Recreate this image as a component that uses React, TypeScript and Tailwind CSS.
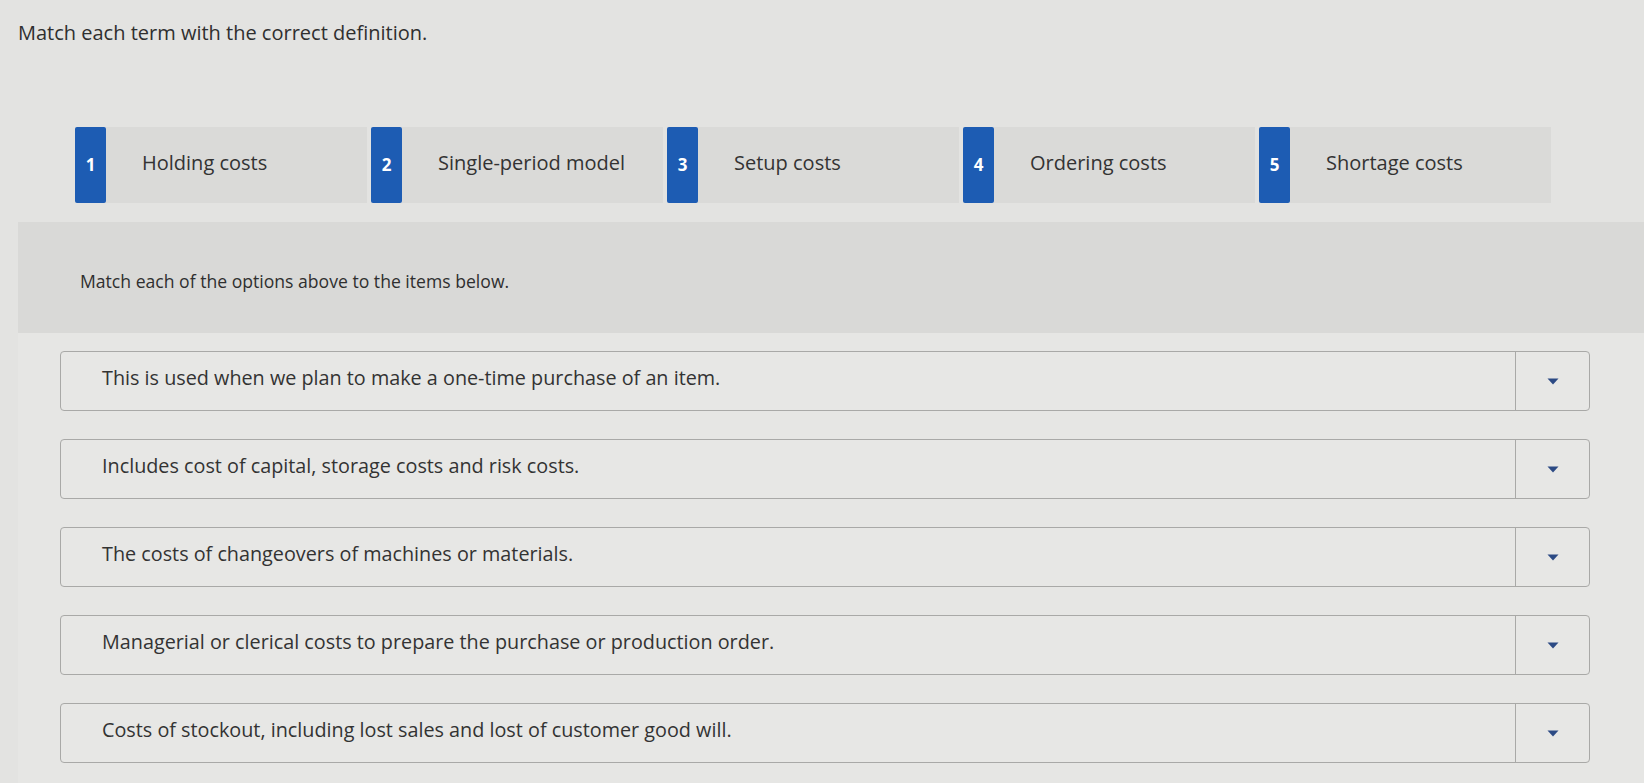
import React from 'react';

const terms = [
    'Holding costs',
    'Single-period model',
    'Setup costs',
    'Ordering costs',
    'Shortage costs',
];

const definitions = [
    'This is used when we plan to make a one-time purchase of an item.',
    'Includes cost of capital, storage costs and risk costs.',
    'The costs of changeovers of machines or materials.',
    'Managerial or clerical costs to prepare the purchase or production order.',
    'Costs of stockout, including lost sales and lost of customer good will.',
];

const Caret: React.FC = () => (
    <svg width="12" height="7" viewBox="0 0 12 7" aria-hidden="true">
        <path d="M0.5 0.5 H11.5 L6 6.5 Z" fill="#2c4a84" />
    </svg>
);

const TermChip: React.FC<{ index: number; label: string }> = ({ index, label }) => (
    <div className="flex h-[76px] w-[292px] items-stretch">
        <div className="flex w-[31px] items-center justify-center rounded-[2px] bg-[#1d5cb3] text-[17px] font-bold text-white">
            {index}
        </div>
        <div className="flex flex-1 items-center bg-[#dadad8] pl-[36px] pb-[4px] text-[20px] text-[#333333]">
            {label}
        </div>
    </div>
);

const DefinitionRow: React.FC<{ text: string }> = ({ text }) => (
    <div className="flex h-[60px] w-[1530px] items-stretch rounded-[4px] border border-[#a9a9a7] bg-[#e7e7e5]">
        <div className="flex flex-1 items-center pl-[41px] pb-[6px] text-[19.8px] text-[#333333]">
            {text}
        </div>
        <div className="flex w-[74px] items-center justify-center border-l border-[#a9a9a7]">
            <Caret />
        </div>
    </div>
);

export default function App() {
    return (
        <div className="min-h-[783px] w-[1644px] overflow-hidden bg-[#e3e3e1] font-['Open_Sans',sans-serif]">
            {/* Question prompt */}
            <h1 className="pl-[18px] pt-[18px] text-[20px] font-normal text-[#2f2f2f]">
                Match each term with the correct definition.
            </h1>

            {/* Term options */}
            <div className="mt-[79px] flex gap-[4px] pl-[75px]">
                {terms.map((term, i) => (
                    <TermChip key={term} index={i + 1} label={term} />
                ))}
            </div>

            {/* Matching area */}
            <div className="mt-[19px] ml-[18px] bg-[#e6e6e4]">
                <div className="flex h-[111px] items-center bg-[#d9d9d7] pl-[62px] pt-[8px] text-[17.6px] text-[#2f2f2f]">
                    Match each of the options above to the items below.
                </div>
                <div className="flex flex-col gap-[28px] pl-[42px] pt-[18px] pb-[24px]">
                    {definitions.map((d) => (
                        <DefinitionRow key={d} text={d} />
                    ))}
                </div>
            </div>
        </div>
    );
}
